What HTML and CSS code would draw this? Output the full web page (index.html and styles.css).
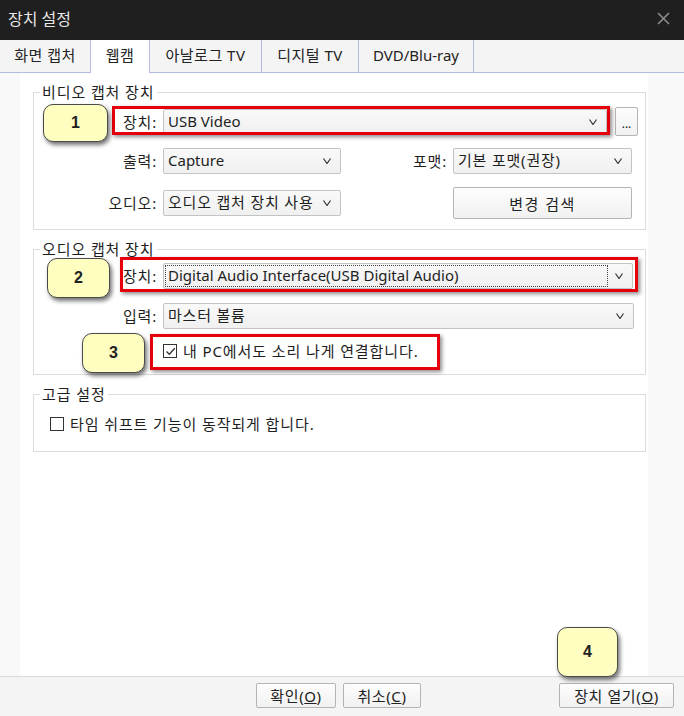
FILE: index.html
```html
<!DOCTYPE html>
<html lang="ko">
<head>
    <meta charset="UTF-8">
    <title>장치 설정</title>
    <link rel="stylesheet" href="styles.css">
</head>
<body>
<div class="dialog">
    <!-- 타이틀 -->
    <div class="titlebar">
        <span class="title">장치 설정</span>
        <svg class="close" width="13" height="13" viewBox="0 0 13 13"><path d="M1 1L12 12M12 1L1 12" stroke="#8c8c8c" stroke-width="1.6" fill="none"/></svg>
    </div>

    <!-- 탭 -->
    <div class="tabs">
        <div class="tab t1">화면 캡처</div>
        <div class="tab t2 active">웹캠</div>
        <div class="tab t3">아날로그 TV</div>
        <div class="tab t4">디지털 TV</div>
        <div class="tab t5">DVD/Blu-ray</div>
    </div>

    <div class="main">
        <div class="side"></div>
        <div class="panel">
            <fieldset class="group g-video">
                <legend>비디오 캡처 장치</legend>
                <div class="row r-device">
                    <span class="lbl">장치:</span>
                    <div class="combo w-device">USB Video<svg class="arr" width="8" height="6" viewBox="0 0 8 6"><path d="M0.5 0.5L4 5.5L7.5 0.5" stroke="#333" stroke-width="1.2" fill="none"/></svg></div>
                    <button class="btn dots">...</button>
                </div>
                <div class="row r-out">
                    <span class="lbl">출력:</span>
                    <div class="combo w-half">Capture<svg class="arr" width="8" height="6" viewBox="0 0 8 6"><path d="M0.5 0.5L4 5.5L7.5 0.5" stroke="#333" stroke-width="1.2" fill="none"/></svg></div>
                    <span class="lbl lbl2">포맷:</span>
                    <div class="combo w-half2 ko">기본 포맷(권장)<svg class="arr" width="8" height="6" viewBox="0 0 8 6"><path d="M0.5 0.5L4 5.5L7.5 0.5" stroke="#333" stroke-width="1.2" fill="none"/></svg></div>
                </div>
                <div class="row r-audio">
                    <span class="lbl">오디오:</span>
                    <div class="combo w-half ko"><span class="clip">오디오 캡처 장치 사용</span><svg class="arr" width="8" height="6" viewBox="0 0 8 6"><path d="M0.5 0.5L4 5.5L7.5 0.5" stroke="#333" stroke-width="1.2" fill="none"/></svg></div>
                    <span class="lbl lbl2"></span>
                    <button class="btn search">변경 검색</button>
                </div>
            </fieldset>

            <fieldset class="group g-audio">
                <legend>오디오 캡처 장치</legend>
                <div class="row r-adevice">
                    <span class="lbl">장치:</span>
                    <div class="combo w-full"><span class="focus">Digital Audio Interface(USB Digital Audio)</span><svg class="arr" width="8" height="6" viewBox="0 0 8 6"><path d="M0.5 0.5L4 5.5L7.5 0.5" stroke="#333" stroke-width="1.2" fill="none"/></svg></div>
                </div>
                <div class="row r-input">
                    <span class="lbl">입력:</span>
                    <div class="combo w-full2 ko">마스터 볼륨<svg class="arr" width="8" height="6" viewBox="0 0 8 6"><path d="M0.5 0.5L4 5.5L7.5 0.5" stroke="#333" stroke-width="1.2" fill="none"/></svg></div>
                </div>
                <div class="row r-check">
                    <span class="lbl"></span>
                    <span class="check"><svg width="11" height="11" viewBox="0 0 11 11"><path d="M1.5 5.5L4.3 8.3L9.8 2.2" stroke="#333" stroke-width="1.3" fill="none"/></svg></span>
                    <span class="check-text">내 PC에서도 소리 나게 연결합니다.</span>
                </div>
            </fieldset>

            <fieldset class="group g-adv">
                <legend>고급 설정</legend>
                <div class="row r-shift">
                    <span class="check"></span>
                    <span class="check-text">타임 쉬프트 기능이 동작되게 합니다.</span>
                </div>
            </fieldset>
        </div>
        <div class="side side-r"></div>
    </div>

    <!-- 하단 버튼 -->
    <div class="footer">
        <button class="btn ok">확인(<u>O</u>)</button>
        <button class="btn cancel">취소(<u>C</u>)</button>
        <button class="btn open">장치 열기(<u>O</u>)</button>
    </div>

    <!-- 설명용 표시 -->
    <div class="mark m1"></div>
    <div class="mark m2"></div>
    <div class="mark m3"></div>
    <div class="callout c1">1</div>
    <div class="callout c2">2</div>
    <div class="callout c3">3</div>
    <div class="callout c4">4</div>
</div>
</body>
</html>
```

FILE: styles.css
```css
*{margin: 0; padding: 0; box-sizing: border-box;}
body {width: 684px;height: 716px;font-family: "Noto Sans", "Noto Sans CJK KR", sans-serif;font-size: 15px;color: #1e1e1e;background: #fff;overflow: hidden;}
.dialog {position: relative;width: 684px;height: 716px;display: flex;flex-direction: column;}
.ko {letter-spacing: 0.8px;}

/* 타이틀 */
.titlebar {height: 40px;background: #1f1f1f;display: flex;align-items: center;justify-content: space-between;padding: 0 14px 0 8px;}
.title {color: #e8e8e8;font-size: 16px;line-height: 20px;margin-top: -3px;}
.close {margin-top: -3px;}

/* 탭 */
.tabs {height: 33px;display: flex;background: #f4f4f4;border-bottom: 1px solid #b3bcdc;}
.tab {height: 32px;line-height: 31px;text-align: center;border-right: 1px solid #b3bcdc;color: #222;letter-spacing: 0.5px;}
.tab.active {background: #fff;height: 33px;margin-bottom: -1px;}
.t1 {width: 91px;}
.t2 {width: 59px;}
.t3 {width: 112px;}
.t4 {width: 97px;}
.t5 {width: 115px;letter-spacing: 0;}

/* 본문 */
.main {flex: 1;display: flex;}
.side {width: 20px;background: #f9f9f9;}
.side-r {flex: 1;}
.panel {width: 628px;background: #fff;padding-left: 13px;}

.group {width: 613px;border: 1px solid #dcdcdc;margin-top: 10px;}
.group legend {margin-left: 6px;padding: 0 2px;line-height: 18px;color: #1e1e1e;letter-spacing: 0.9px;}
.g-video {padding: 6px 0 10px 0;}
.g-audio {padding: 5px 0 11px 0;}
.g-adv {padding: 9px 0 15px 0;}

.row {display: flex;align-items: center;}
.lbl {width: 123px;margin-right: 6px;text-align: right;line-height: 20px;letter-spacing: 0.8px;}
.lbl2 {width: 106px;}
.r-device {height: 29px;}
.r-out {height: 26px;margin-top: 12px;}
.r-audio {height: 32px;margin-top: 13px;}
.r-adevice {height: 26px;}
.r-input {height: 26px;margin-top: 14px;}
.r-check {height: 24px;margin-top: 10px;}
.r-shift {height: 24px;padding-left: 16px;}

/* 콤보박스 */
.combo {position: relative;height: 26px;border: 1px solid #c3c3c3;border-radius: 2px;background: linear-gradient(#f9f9f9, #f0f0f0);padding: 0 22px 0 4px;line-height: 23px;white-space: nowrap;overflow: hidden;}
.combo .arr {position: absolute;right: 9px;top: 9px;}
.r-device .combo {height: 25px;}
.w-device {width: 444px;}
.w-half {width: 178px;}
.w-half2 {width: 179px;}
.w-full {width: 470px;}
.w-full2 {width: 471px;}
.clip {display: block;width: 148px;overflow: hidden;}
.focus {display: block;margin: 1px 0 0 -3px;padding-left: 2px;height: 22px;line-height: 19px;width: 443px;border: 1px dotted #444;}

/* 버튼 */
.btn {font-family: inherit;font-size: 15px;color: #222;background: linear-gradient(#fdfdfd, #f1f1f1);border: 1px solid #b4b4b4;border-radius: 2px;height: 25px;letter-spacing: 0.6px;}
.btn u {text-decoration: underline;}
.dots {width: 23px;height: 29px;margin-left: 8px;font-size: 12px;line-height: 20px;padding-top: 4px;letter-spacing: 0;}
.search {width: 179px;height: 32px;letter-spacing: 1.5px;}

/* 체크박스 */
.check {width: 14px;height: 14px;border: 1px solid #333;background: #fff;display: flex;align-items: center;justify-content: center;}
.check-text {margin-left: 6px;line-height: 20px;letter-spacing: 0.9px;}

/* 하단 */
.footer {height: 40px;background: #f4f4f4;border-top: 1px solid #dadada;display: flex;align-items: flex-start;padding: 6px 10px 0 256px;}
.ok {width: 80px;}
.cancel {width: 78px;margin-left: 7px;}
.open {width: 115px;margin-left: auto;}

/* 설명 표시 */
.mark {position: absolute;border: 3px solid #e6000c;box-shadow: 2px 2px 4px rgba(0,0,0,0.45);}
.m1 {left: 112px;top: 106px;width: 498px;height: 29px;}
.m2 {left: 120px;top: 257px;width: 518px;height: 35px;}
.m3 {left: 150px;top: 334px;width: 290px;height: 36px;}
.callout {position: absolute;background: #fefec0;border: 1px solid #4a4a4a;border-radius: 10px;box-shadow: 2px 3px 4px rgba(0,0,0,0.55);font-family: "Liberation Sans", sans-serif;font-weight: bold;font-size: 16px;color: #222;display: flex;align-items: center;justify-content: center;}
.c1 {left: 43px;top: 104px;width: 65px;height: 38px;}
.c2 {left: 47px;top: 258px;width: 63px;height: 40px;}
.c3 {left: 82px;top: 333px;width: 63px;height: 40px;}
.c4 {left: 557px;top: 627px;width: 61px;height: 50px;}
```
